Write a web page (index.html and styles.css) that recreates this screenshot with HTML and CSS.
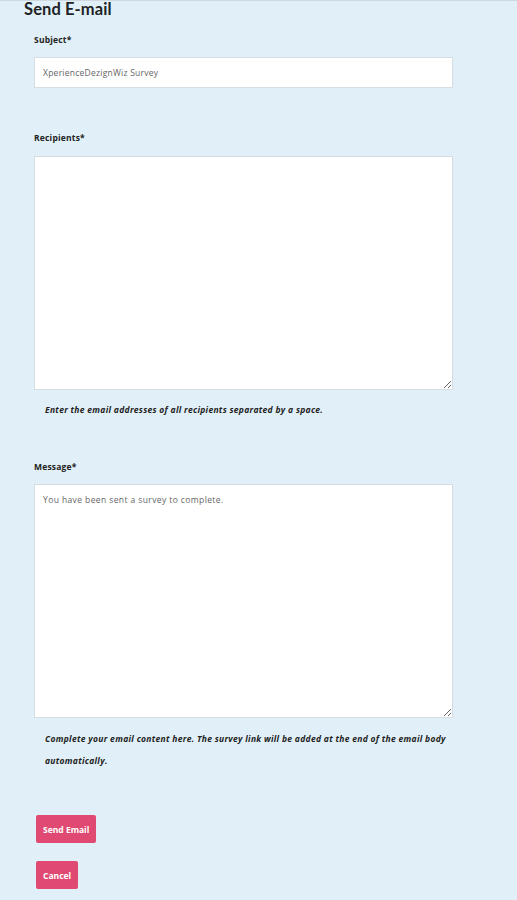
FILE: index.html
```html
<!DOCTYPE html>
<html>
<head>
<meta charset="utf-8">
<link rel="stylesheet" href="styles.css">
</head>
<body>
<div class="page">
  <h1 class="title">Send E-mail</h1>
  <form class="form">
    <label class="label label-first">Subject*</label>
    <input class="input" type="text" value="XperienceDezignWiz Survey">
    <label class="label label-gap">Recipients*</label>
    <textarea class="area"></textarea>
    <p class="help">Enter the email addresses of all recipients separated by a space.</p>
    <label class="label label-gap2">Message*</label>
    <textarea class="area area-msg">You have been sent a survey to complete.</textarea>
    <p class="help help-msg">Complete your email content here. The survey link will be added at the end of the email body automatically.</p>
    <div class="actions">
      <button type="button" class="btn">Send Email</button>
      <button type="button" class="btn">Cancel</button>
    </div>
  </form>
</div>
</body>
</html>
```

FILE: styles.css
```css
html, body {
  margin: 0;
  padding: 0;
  background: #e1f0f8;
}
body {
  font-family: "Open Sans", Lato, sans-serif;
  color: #222;
  min-height: 900px;
  border-top: 1px solid #cfd8de;
  box-sizing: border-box;
}
.title {
  margin: 0;
  padding-left: 24px;
  font-family: Lato, "Open Sans", sans-serif;
  font-size: 16.5px;
  line-height: 17px;
  font-weight: 700;
  color: #1f2326;
  letter-spacing: 0.1px;
}
.form {
  display: flex;
  flex-direction: column;
  align-items: flex-start;
  padding-left: 34px;
  width: 419px;
}
.label {
  display: block;
  font-size: 8.5px;
  line-height: 12px;
  font-weight: 700;
  letter-spacing: 0.2px;
  color: #222;
}
.label-first { margin-top: 16px; }
.label-gap { margin-top: 44px; }
.label-gap2 { margin-top: 40px; }
.input {
  margin-top: 11px;
  width: 419px;
  height: 31px;
  box-sizing: border-box;
  border: 1px solid #d6dde2;
  background: #fff;
  padding: 0 8px;
  font-family: "Open Sans", Lato, sans-serif;
  font-size: 8.5px;
  letter-spacing: 0.25px;
  color: #666;
  outline: none;
}
.area {
  margin-top: 12px;
  width: 419px;
  height: 234px;
  box-sizing: border-box;
  border: 1px solid #d6dde2;
  background: #fff;
  padding: 9px 8px;
  font-family: "Open Sans", Lato, sans-serif;
  font-size: 8.5px;
  line-height: 12px;
  letter-spacing: 0.4px;
  color: #666;
  outline: none;
  resize: vertical;
}
.area-msg {
  margin-top: 11px;
}
.help {
  margin: 9px 0 0 0;
  padding-left: 11px;
  font-size: 8.5px;
  line-height: 22px;
  font-style: italic;
  font-weight: 700;
  letter-spacing: 0.3px;
  color: #222;
}
.help-msg {
  margin-top: 10px;
}
.actions {
  display: flex;
  flex-direction: column;
  align-items: flex-start;
  gap: 18px;
  margin-top: 43px;
  padding-left: 2px;
}
.btn {
  height: 28px;
  padding: 0 7px;
  border: none;
  border-radius: 2px;
  background: #e04a72;
  color: #fff;
  font-family: "Open Sans", Lato, sans-serif;
  font-size: 8.5px;
  font-weight: 700;
  cursor: pointer;
}
```
